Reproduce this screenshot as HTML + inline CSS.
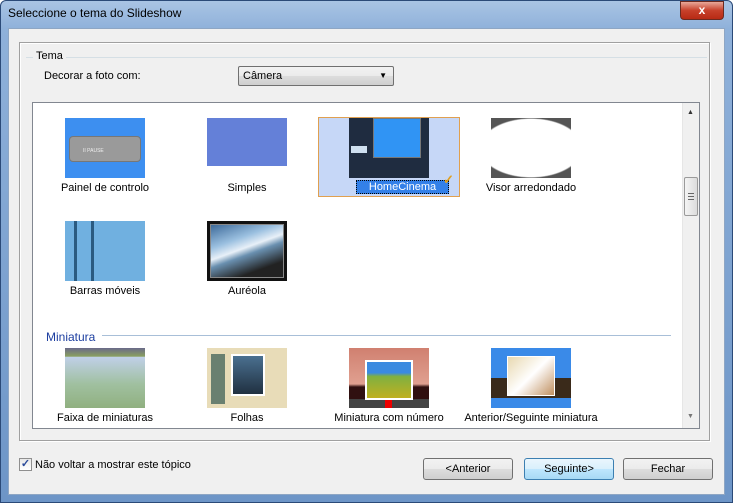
<!DOCTYPE html>
<html><head><meta charset="utf-8"><style>
*{margin:0;padding:0;box-sizing:border-box}
body{width:733px;height:503px;overflow:hidden;font-family:"Liberation Sans",sans-serif;font-size:11px;color:#000;background:#fff;position:relative}
.abs{position:absolute}
#frame{left:0;top:0;width:733px;height:503px;background:linear-gradient(180deg,#a9c4e4 0,#8fb1da 28px,#6d95c7 100%);border:1px solid #2b4a78;border-radius:6px 6px 0 0}
#title{left:8px;top:6px;font-size:12px;color:#000}
#close{left:680px;top:1px;width:44px;height:19px;background:linear-gradient(#e8a89a,#c7402a 50%,#b72a14);border:1px solid #6b2a20;border-radius:0 0 4px 4px;color:#fff;text-align:center;font-weight:bold;font-size:12px;line-height:17px}
#client{left:8px;top:28px;width:717px;height:467px;background:#f0f0f0;border:1px solid #8ea6c4}
#panel{left:19px;top:42px;width:691px;height:399px;border:1px solid #a0a0a0;box-shadow:inset 1px 1px 0 #fff,1px 1px 0 #fff}
#grp{left:26px;top:57px;width:681px;height:1px;background:#d5dfe5}
#tema{left:33px;top:50px;background:#f0f0f0;padding:0 3px}
#combo{left:238px;top:66px;width:156px;height:20px;border:1px solid #707070;border-radius:2px;background:linear-gradient(#f2f2f2,#ebebeb 50%,#dddddd 51%,#cfcfcf);padding:3px 4px}
#list{left:32px;top:102px;width:668px;height:327px;background:#fff;border:1px solid #828790}
#sb{left:682px;top:103px;width:17px;height:325px;background:#f0f0f0;border-left:1px solid #e6e6e6}
.th{position:absolute;width:80px;height:60px}
.lb{position:absolute;width:142px;text-align:center}
.btn{position:absolute;top:458px;width:90px;height:22px;border:1px solid #707070;border-radius:3px;background:linear-gradient(#f2f2f2,#ebebeb 50%,#dddddd 51%,#cfcfcf);text-align:center;line-height:20px;font-size:11px}
</style></head><body>
<div id="frame" class="abs"></div>
<div id="title" class="abs">Seleccione o tema do Slideshow</div>
<div id="close" class="abs">x</div>
<div id="client" class="abs"></div>
<div id="panel" class="abs"></div>
<div id="grp" class="abs"></div>
<div id="tema" class="abs">Tema</div>
<div class="abs" style="left:44px;top:70px">Decorar a foto com:</div>
<div id="combo" class="abs">Câmera<span style="position:absolute;right:6px;top:4px;font-size:8px">▼</span></div>
<div id="list" class="abs"></div>
<div id="sb" class="abs">
 <div style="position:absolute;left:4px;top:6px;font-size:7px;color:#333">▲</div>
 <div style="position:absolute;left:1px;top:74px;width:14px;height:39px;border:1px solid #9a9a9a;border-radius:2px;background:linear-gradient(90deg,#f4f4f4,#dcdcdc)"><div style="position:absolute;left:3px;top:15px;width:6px;height:7px;border-top:1px solid #666;border-bottom:1px solid #666"><div style="margin-top:2px;border-top:1px solid #666"></div></div></div>
 <div style="position:absolute;left:4px;top:310px;font-size:7px;color:#777">▼</div>
</div>

<div class="abs" style="left:318px;top:117px;width:142px;height:80px;background:#c6d7f7;border:1px solid #e0a050"></div>

<div class="th" style="left:65px;top:118px;background:#3d8ff0"><div style="position:absolute;left:4px;top:18px;width:72px;height:26px;background:#9a9a9a;border-radius:4px;border:1px solid #777"></div><div style="position:absolute;left:18px;top:30px;font-size:5px;color:#eee">II PAUSE</div></div>
<div class="lb" style="left:34px;top:182px">Painel de controlo</div>
<div class="th" style="left:207px;top:118px;background:linear-gradient(#6480d8 0,#6480d8 80%,#fff 80%)"></div>
<div class="lb" style="left:176px;top:182px">Simples</div>
<div class="th" style="left:349px;top:118px;background:#0d1f33;background-image:radial-gradient(#556 30%,transparent 31%);background-size:2px 2px"><div style="position:absolute;left:24px;top:0;width:48px;height:40px;background:#3094f4;border:1px solid #777"></div><div style="position:absolute;left:2px;top:28px;width:16px;height:7px;background:#cfe0f0"></div></div>
<div class="abs" style="left:356px;top:180px;width:93px;height:14px;background:#3380e8;border:1px dotted #000;color:#fff;text-align:center;line-height:12px">HomeCinema</div>
<div class="abs" style="left:443px;top:172px;color:#e0a020;font-size:13px;font-weight:bold">✓</div>
<div class="lb" style="left:460px;top:182px">Visor arredondado</div>
<div class="th" style="left:491px;top:118px;overflow:hidden;background:radial-gradient(ellipse 52px 30px at 50% 50%,#fff 96%,#555 100%)"></div>

<div class="th" style="left:65px;top:221px;background:#70b0e0"><div style="position:absolute;left:9px;top:0;width:3px;height:60px;background:#2a5a80"></div><div style="position:absolute;left:26px;top:0;width:3px;height:60px;background:#2a5a80"></div></div>
<div class="lb" style="left:34px;top:285px">Barras móveis</div>
<div class="th" style="left:207px;top:221px;background:#111"><div style="position:absolute;left:3px;top:3px;width:74px;height:54px;border:1px solid #888;background:linear-gradient(160deg,#3d6a9a 0,#9bc0e0 30%,#e8f0f8 45%,#6a90b0 55%,#222 80%)"></div></div>
<div class="lb" style="left:176px;top:285px">Auréola</div>

<div class="abs" style="left:46px;top:330px;color:#1c3ea0;font-size:12px">Miniatura</div>
<div class="abs" style="left:102px;top:335px;width:569px;height:1px;background:#a8bfd8"></div>

<div class="th" style="left:65px;top:348px;background:linear-gradient(#6a6a8a 0,#8aa060 14%,#c0d0e8 15%,#a0c0a0 60%,#90b080)"></div>
<div class="lb" style="left:34px;top:412px">Faixa de miniaturas</div>
<div class="th" style="left:207px;top:348px;background:#e8dcb8"><div style="position:absolute;left:4px;top:6px;width:14px;height:50px;background:#6a8070"></div><div style="position:absolute;left:24px;top:6px;width:34px;height:42px;background:linear-gradient(#4a7090,#203040);border:2px solid #fff"></div></div>
<div class="lb" style="left:176px;top:412px">Folhas</div>
<div class="th" style="left:349px;top:348px;background:linear-gradient(#d08070,#e0a090 60%,#301010 65%,#301010 85%,#444 85%)"><div style="position:absolute;left:16px;top:12px;width:48px;height:40px;background:linear-gradient(#3a8ae0 30%,#80b040 40%,#c0b020);border:2px solid #fff"></div><div style="position:absolute;left:36px;top:52px;width:7px;height:8px;background:#e00"></div></div>
<div class="lb" style="left:318px;top:412px">Miniatura com número</div>
<div class="th" style="left:491px;top:348px;background:#3a8ae8"><div style="position:absolute;left:0;top:30px;width:80px;height:20px;background:#3a2a1a"></div><div style="position:absolute;left:16px;top:8px;width:48px;height:40px;background:linear-gradient(135deg,#e8d8b0,#fff 50%,#c09060);border:1px solid #fff"></div></div>
<div class="lb" style="left:460px;top:412px">Anterior/Seguinte miniatura</div>

<div class="abs" style="left:19px;top:458px;width:13px;height:13px;border:1px solid #8f8f8f;background:linear-gradient(#e8e8e8,#fff);color:#2a4a9a;font-size:11px;line-height:11px;text-align:center;font-weight:bold">✓</div>
<div class="abs" style="left:35px;top:459px">Não voltar a mostrar este tópico</div>

<div class="btn" style="left:423px">&lt;Anterior</div>
<div class="btn" style="left:524px;border-color:#3c7fb1;background:linear-gradient(#eaf6fd,#d9f0fc 50%,#bee6fd 51%,#a7d9f5)">Seguinte&gt;</div>
<div class="btn" style="left:623px">Fechar</div>
</body></html>
